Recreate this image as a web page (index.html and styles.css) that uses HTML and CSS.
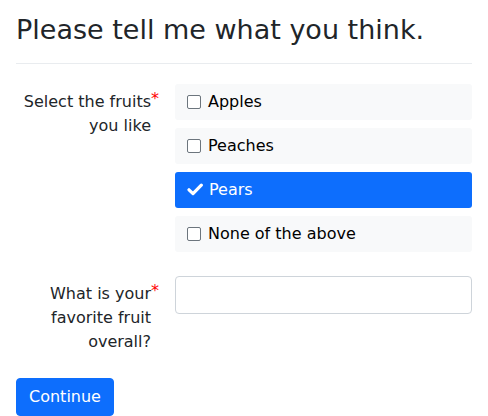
FILE: index.html
```html
<!DOCTYPE html>
<html>
<head>
<meta charset="utf-8">
<link rel="stylesheet" href="styles.css">
</head>
<body>
<div class="page">
  <h1 class="title">Please tell me what you think.</h1>
  <hr class="rule">
  <div class="row">
    <div class="label"><span class="label-text">Select the fruits you like<span class="req">*</span></span></div>
    <div class="field options">
      <div class="option"><span class="box"></span><span>Apples</span></div>
      <div class="option"><span class="box"></span><span>Peaches</span></div>
      <div class="option selected"><svg class="check" viewBox="0 0 16 16" width="16" height="16"><path d="M2 7.8 L6 11.6 L14.3 3.2" fill="none" stroke="#fff" stroke-width="3.2" stroke-linecap="round" stroke-linejoin="round"/></svg><span>Pears</span></div>
      <div class="option"><span class="box"></span><span>None of the above</span></div>
    </div>
  </div>
  <div class="row row2">
    <div class="label"><span class="label-text">What is your favorite fruit overall?<span class="req">*</span></span></div>
    <div class="field"><input class="input" type="text"></div>
  </div>
  <button class="btn">Continue</button>
</div>
</body>
</html>
```
FILE: styles.css
```css
* { box-sizing: border-box; }
html, body { margin: 0; padding: 0; background: #fff; }
body {
  font-family: "DejaVu Sans", sans-serif;
  font-size: 16px;
  line-height: 24px;
  color: #212529;
}
.page { padding: 12px 16px 0 16px; }
.title {
  margin: 0 0 16px 0;
  font-size: 27px;
  font-weight: 400;
  line-height: 35px;
  color: #212529;
}
.rule {
  margin: 0 0 20px 0;
  border: 0;
  border-top: 1px solid #e9ecef;
  height: 0;
}
.row {
  display: flex;
  gap: 16px;
}
.row2 { margin-top: 24px; }
.label {
  width: 143px;
  flex: none;
  text-align: right;
  padding: 6px 8px 0 0;
}
.label-text { position: relative; }
.req {
  position: absolute;
  right: -8px;
  top: -5px;
  color: #ff0000;
  font-size: 16px;
}
.field { flex: 1; }
.options { display: flex; flex-direction: column; gap: 8px; }
.option {
  height: 36px;
  background: #f8f9fa;
  border-radius: 3px;
  display: flex;
  align-items: center;
  padding-left: 13px;
  gap: 8px;
  color: #000;
}
.option.selected {
  background: #0d6efd;
  color: #fff;
  padding-left: 12px;
  gap: 6px;
}
.box {
  width: 14px;
  height: 14px;
  border: 1.5px solid #6c757d;
  border-radius: 2px;
  background: #fff;
  flex: none;
  margin-left: -1px;
  margin-right: -1px;
}
.check { flex: none; }
.input {
  display: block;
  width: 100%;
  height: 38px;
  border: 1px solid #ced4da;
  border-radius: 4px;
  background: #fff;
  font: inherit;
}
.btn {
  margin-top: 24px;
  display: block;
  height: 38px;
  padding: 0 12px;
  background: #0d6efd;
  color: #fff;
  border: 1px solid #0d6efd;
  border-radius: 4px;
  font-family: "DejaVu Sans", sans-serif;
  font-size: 16px;
  line-height: 24px;
}
```
